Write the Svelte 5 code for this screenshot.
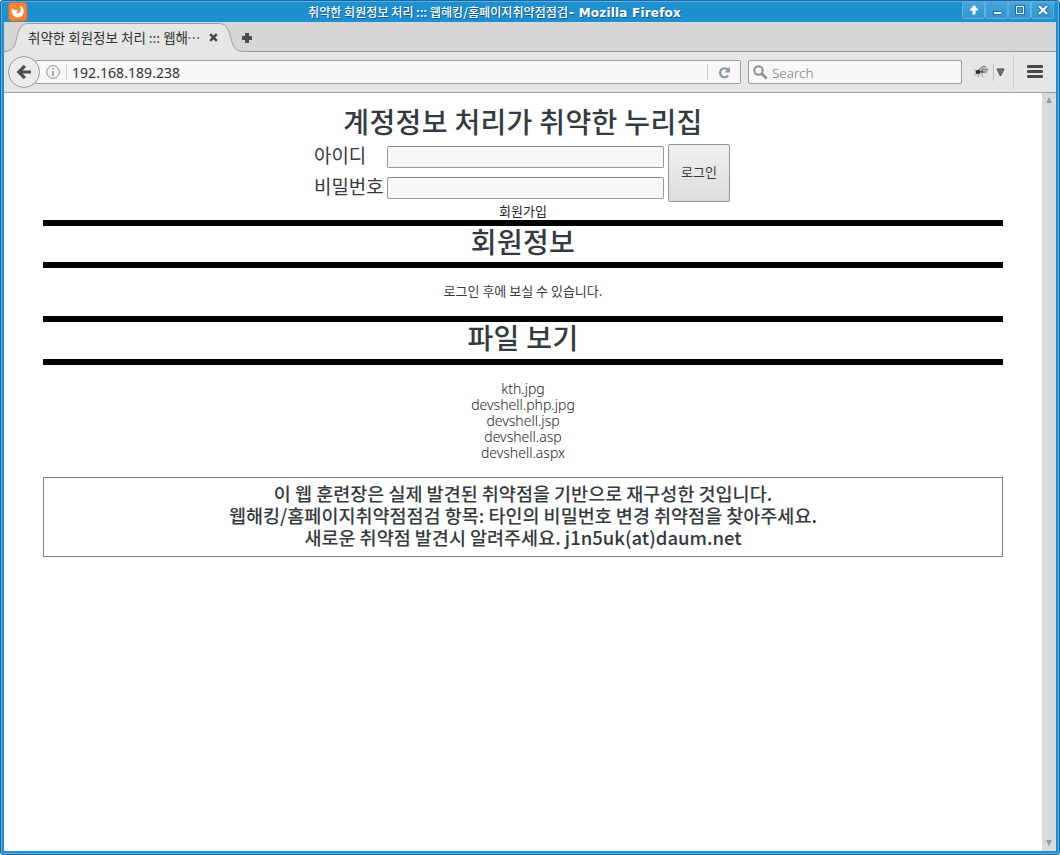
<script>
const files = [
    'kth.jpg',
    'devshell.php.jpg',
    'devshell.jsp',
    'devshell.asp',
    'devshell.aspx'
];

let userId = $state('');
let password = $state('');
</script>

<div class="window">
    <header class="titlebar">
        <svg class="logo" width="20" height="20" viewBox="0 0 20 20">
            <rect x="0.5" y="0.5" width="18.5" height="18.5" rx="3.5" fill="#f58536" stroke="#c97038" />
            <path d="M4 6.200C3 11 5.200 15.300 9.500 15.300c4.300 0 6.400-3.300 6.200-6.600C15.500 6 13.800 4 11.300 3.800c1.500 1.400 1.900 3 1.500 4.600-.4 1.700-1.600 2.600-3.200 2.600-1 0-1.500-.4-1.800-1 1 .1 1.900-.2 2.400-.9-1-.1-1.300-.6-1.200-1.300-1.600.6-3.500.2-5-1.600Z" fill="#fff" />
        </svg>
        <div class="title"><span class="ko">취약한 회원정보 처리 ::: 웹해킹/홈페이지취약점점검</span><span class="app"> - Mozilla Firefox</span></div>
        <div class="controls">
            <button aria-label="Shade">
                <svg width="14" height="14" viewBox="0 0 14 14"><path d="M7 2.500 11 7H3Z" fill="#fff" stroke="#fff" /><path d="M5.500 6h3v5.500h-3Z" fill="#fff" /></svg>
            </button>
            <button aria-label="Minimize">
                <svg width="14" height="14" viewBox="0 0 14 14"><path d="M3 8h8v4H3Z" fill="#1a6c9f" /><path d="M4 9h7v2H4Z" fill="#fff" /></svg>
            </button>
            <button aria-label="Maximize">
                <svg width="14" height="14" viewBox="0 0 14 14"><path d="M2 2h10v10H2Z" fill="#1a6c9f" /><path d="M3.500 3.500h7v7h-7Z" fill="#3d9dd5" stroke="#fff" /><path d="M4.500 4.500h5v5h-5Z" fill="none" stroke="#1a6c9f" /></svg>
            </button>
            <button aria-label="Close">
                <svg width="14" height="14" viewBox="0 0 14 14"><path d="m2.500 2.500 9 9M11.500 2.500l-9 9" stroke="#1a6c9f" stroke-width="4" /><path d="m3 3 8 8M11 3l-8 8" stroke="#fff" stroke-width="2.400" /></svg>
            </button>
        </div>
    </header>

    <div class="tabs">
        <div class="tab">
            <svg class="tab-shape" width="240" height="30" viewBox="0 0 240 30">
                <path d="M0 29.500C8 29.500 11 25 13 15 15 5 18 1.500 25 1.500H214C221 1.500 224 5 226.500 15 229 25 231 29.500 240 29.500V31H0Z" fill="#e6e6e6" />
                <path d="M0 29.500C8 29.500 11 25 13 15 15 5 18 1.500 25 1.500H214C221 1.500 224 5 226.500 15 229 25 231 29.500 240 29.500" fill="none" stroke="#9b9ea1" />
            </svg>
            <span class="tab-label">취약한 회원정보 처리 ::: 웹해<i>⋯</i></span>
            <svg class="tab-close" width="9" height="9" viewBox="0 0 9 9"><path d="m1.200 1.200 6.600 6.600M7.800 1.200 1.200 7.800" stroke="#454545" stroke-width="2.400" /></svg>
        </div>
        <svg class="new-tab" width="12" height="12" viewBox="0 0 12 12"><path d="M4 1h4v3h3v4H8v3H4V8H1V4h3Z" fill="#4b4b4b" /></svg>
    </div>

    <nav class="toolbar">
        <button class="back" aria-label="Back">
            <svg width="16" height="16" viewBox="0 0 16 16"><path d="M8.800 1.800 2.800 8l6 6.200M3 8h12" fill="none" stroke="#4d4d4d" stroke-width="3.200" /></svg>
        </button>
        <div class="urlbar">
            <svg class="info" width="14" height="14" viewBox="0 0 14 14"><circle cx="7" cy="7" r="6.300" fill="none" stroke="#8b8b8b" /><path d="M7 3v1.800M7 6v5" stroke="#8b8b8b" stroke-width="1.500" /></svg>
            <span class="address">192.168.189.238</span>
            <div class="reload">
                <svg width="13" height="13" viewBox="0 0 13 13"><path d="M10.300 9.300A4.500 4.500 0 1 1 9.500 3.300" fill="none" stroke="#8795a3" stroke-width="2.200" /><path d="M12 .8v5.700H6.300Z" fill="#8795a3" /></svg>
            </div>
        </div>
        <div class="search">
            <svg width="15" height="15" viewBox="0 0 15 15"><circle cx="5.500" cy="5.500" r="4.200" fill="none" stroke="#8d8d8d" stroke-width="2" /><path d="m8.500 8.500 5.200 5" stroke="#8d8d8d" stroke-width="2.500" /></svg>
            <span>Search</span>
        </div>
        <div class="addon">
            <svg width="16" height="14" viewBox="0 0 16 14">
                <path d="M5 5 10 1l3 .5-3 3 5-.7-1 2.200-5 2Z" fill="#b0b0b0" stroke="#777" stroke-width=".7" />
                <path d="m3 6-2-1.500M4 9l-3 1M6 9l-1 3M8 8l2 4M9 7l5 1" stroke="#777" stroke-width=".7" />
                <ellipse cx="5" cy="7" rx="2.500" ry="2" fill="#282828" /><circle cx="9" cy="6.500" r="1.200" fill="#555" />
            </svg>
            <svg class="drop" width="9" height="9" viewBox="0 0 9 9"><path d="M1 1h7L4.500 8Z" fill="#777" stroke="#444" /></svg>
        </div>
        <button class="menu" aria-label="Menu"><i></i><i></i><i></i></button>
    </nav>

    <div class="viewport">
        <main>
            <h1>계정정보 처리가 취약한 누리집</h1>
            <form>
                <label for="userid">아이디</label>
                <input id="userid" bind:value={userId} />
                <button class="login" type="button">로그인</button>
                <label for="password">비밀번호</label>
                <input id="password" type="password" bind:value={password} />
            </form>
            <p class="join">회원가입</p>
            <h2>회원정보</h2>
            <p class="message">로그인 후에 보실 수 있습니다.</p>
            <h2 class="files-title">파일 보기</h2>
            <ul>
                {#each files as file}
                    <li>{file}</li>
                {/each}
            </ul>
            <footer>
                <p>이 웹 훈련장은 실제 발견된 취약점을 기반으로 재구성한 것입니다.</p>
                <p>웹해킹/홈페이지취약점점검 항목: 타인의 비밀번호 변경 취약점을 찾아주세요.</p>
                <p>새로운 취약점 발견시 알려주세요. j1n5uk(at)daum.net</p>
            </footer>
        </main>
        <div class="scrollbar">
            <svg width="8" height="7" viewBox="0 0 8 7"><path d="M4 0 7 6H1Z" fill="#999" /></svg>
            <svg width="8" height="7" viewBox="0 0 8 7"><path d="M1 0h6L4 6Z" fill="#999" /></svg>
        </div>
    </div>
</div>

<style>
:global(body) {
    background: #fff;
}

* {
    box-sizing: border-box;
}

svg {
    display: block;
    flex: none;
}

.window {
    width: 1060px;
    height: 855px;
    display: flex;
    flex-direction: column;
    padding: 1px 3px 3px;
    border: 1px solid #1868a0;
    border-radius: 3px;
    background: #1e8fcf;
    box-shadow: inset 0 0 0 1px #5eb0e0;
    font-family: "Noto Sans", "Noto Sans CJK KR", sans-serif;
    color: #343a40;
}

.titlebar {
    height: 20px;
    flex: none;
    display: flex;
    align-items: flex-start;
    padding: 0 2px 0 4px;
}

.title {
    flex: 1;
    height: 18px;
    margin-left: 280px;
    color: #fff;
    white-space: pre;
    line-height: 18px;
    text-shadow: 1px 1px #165b88;
}

.title .ko {
    font: 500 12.1px/18px "Noto Sans CJK KR", sans-serif;
}

.title .app {
    margin-left: 1px;
    font: bold 12px/18px "DejaVu Sans", sans-serif;
    letter-spacing: 0.2px;
}

.controls {
    display: flex;
}

.controls button {
    width: 23px;
    height: 17px;
    padding: 0;
    border: 1px solid #5db1e0;
    border-top: 0;
    border-radius: 0 0 3px 3px;
    background: linear-gradient(#48a4da, #3197d2);
    display: grid;
    place-items: center;
}

.tabs {
    height: 30px;
    flex: none;
    display: flex;
    background: #d6d6d6;
    border-bottom: 1px solid #9b9b9b;
}

.tab {
    width: 237px;
    height: 30px;
    flex: none;
    display: flex;
    align-items: center;
    position: relative;
    padding-left: 24px;
}

.tab-shape {
    position: absolute;
    left: 0;
    top: 0;
}

.tab-label {
    position: relative;
    width: 181px;
    font: 13.5px/30px "Noto Sans CJK KR", sans-serif;
    white-space: nowrap;
    color: #333;
}

.tab-label i {
    font-style: normal;
    margin-left: -1px;
}

.tab-close {
    position: relative;
}

.new-tab {
    margin-top: 10px;
}

.toolbar {
    height: 41px;
    flex: none;
    display: flex;
    align-items: center;
    background: #e6e6e6;
    border-bottom: 1px solid #a0a0a0;
    padding-left: 4px;
}

.back {
    position: relative;
    z-index: 1;
    width: 32px;
    height: 32px;
    flex: none;
    display: grid;
    place-items: center;
    padding: 0;
    border: 1px solid #979797;
    border-radius: 50%;
    background: #ebebeb;
}

.urlbar {
    width: 706px;
    height: 24px;
    margin-left: -5px;
    display: flex;
    align-items: center;
    border: 1px solid #999;
    border-radius: 2px;
    background: #f7f7f7;
    padding-left: 10px;
}

.address {
    flex: 1;
    height: 16px;
    margin-left: 6px;
    padding-left: 5px;
    border-left: 1px solid #ccc;
    font-size: 14px;
    line-height: 18px;
    letter-spacing: 0.05px;
    color: #333;
}

.reload {
    width: 33px;
    height: 16px;
    border-left: 1px solid #ccc;
    display: grid;
    place-items: center;
}

.search {
    width: 214px;
    height: 24px;
    margin-left: 7px;
    padding-left: 4px;
    display: flex;
    align-items: center;
    gap: 4px;
    border: 1px solid #999;
    border-radius: 2px;
    background: #f7f7f7;
    color: #777;
    font-size: 13.5px;
    font-weight: 300;
}

.search span {
    line-height: 16px;
    padding-top: 2px;
}

.addon {
    display: flex;
    align-items: center;
    width: 52px;
    height: 34px;
    padding-left: 11px;
    border-right: 1px solid #d0d0d0;
}

.drop {
    box-sizing: content-box;
    margin-left: 4px;
    padding: 4px 0 4px 2px;
    border-left: 1px solid #c2c2c2;
}

.menu {
    width: 16px;
    margin: 0 0 1px 13px;
    padding: 0;
    border: 0;
    background: none;
    display: grid;
    gap: 2px;
}

.menu i {
    height: 3px;
    border-radius: 1px;
    background: #484848;
}

.viewport {
    flex: 1;
    display: flex;
    background: #fff;
    font-family: "Noto Sans CJK KR", sans-serif;
}

main {
    width: 1038px;
    padding: 12px 39px 0;
    text-align: center;
}

h1,
h2,
p,
ul {
    margin: 0;
}

h1 {
    height: 39px;
    font-size: 28px;
    font-weight: 500;
    line-height: 32px;
    letter-spacing: 0.35px;
}

form {
    display: grid;
    grid-template-columns: 73px 277px 62px;
    grid-template-rows: 29px 29px;
    row-gap: 2px;
    width: 416px;
    margin-left: 271px;
    text-align: left;
}

label {
    font-size: 18.9px;
    line-height: 22px;
}

input {
    width: 277px;
    height: 22px;
    margin: 2px 0 0;
    border: 1px solid #999;
    border-top-color: #888;
    border-radius: 2px;
    background: #f7f7f7;
}

.login {
    grid-row: 1 / 3;
    grid-column: 3;
    width: 62px;
    height: 58px;
    margin-left: 4px;
    padding: 0 0 3px;
    border: 1px solid #949494;
    border-radius: 2px;
    background: linear-gradient(#f1f1f1, #dcdcdc);
    color: #343a40;
    font: 13px "Noto Sans CJK KR", sans-serif;
}

.join {
    height: 16px;
    font-size: 13px;
    line-height: 14px;
    color: #222;
}

h2 {
    height: 48px;
    border: solid #000;
    border-width: 6px 0;
    font-size: 28px;
    font-weight: 500;
    line-height: 31px;
    letter-spacing: 0.35px;
}

.message {
    height: 48px;
    font-size: 13px;
    line-height: 46px;
}

.files-title {
    height: 49px;
}

ul {
    padding: 16px 0;
    list-style: none;
    color: #1c2126;
    font: 300 14px/16px "Noto Sans", sans-serif;
}

li {
    height: 16px;
}

footer {
    height: 80px;
    padding-top: 4px;
    border: 1px solid #808080;
    font-size: 18.5px;
    font-weight: 500;
    line-height: 22px;
}

.scrollbar {
    width: 14px;
    flex: none;
    padding: 4px 3px;
    display: flex;
    flex-direction: column;
    justify-content: space-between;
    background: #dadada;
}
</style>
